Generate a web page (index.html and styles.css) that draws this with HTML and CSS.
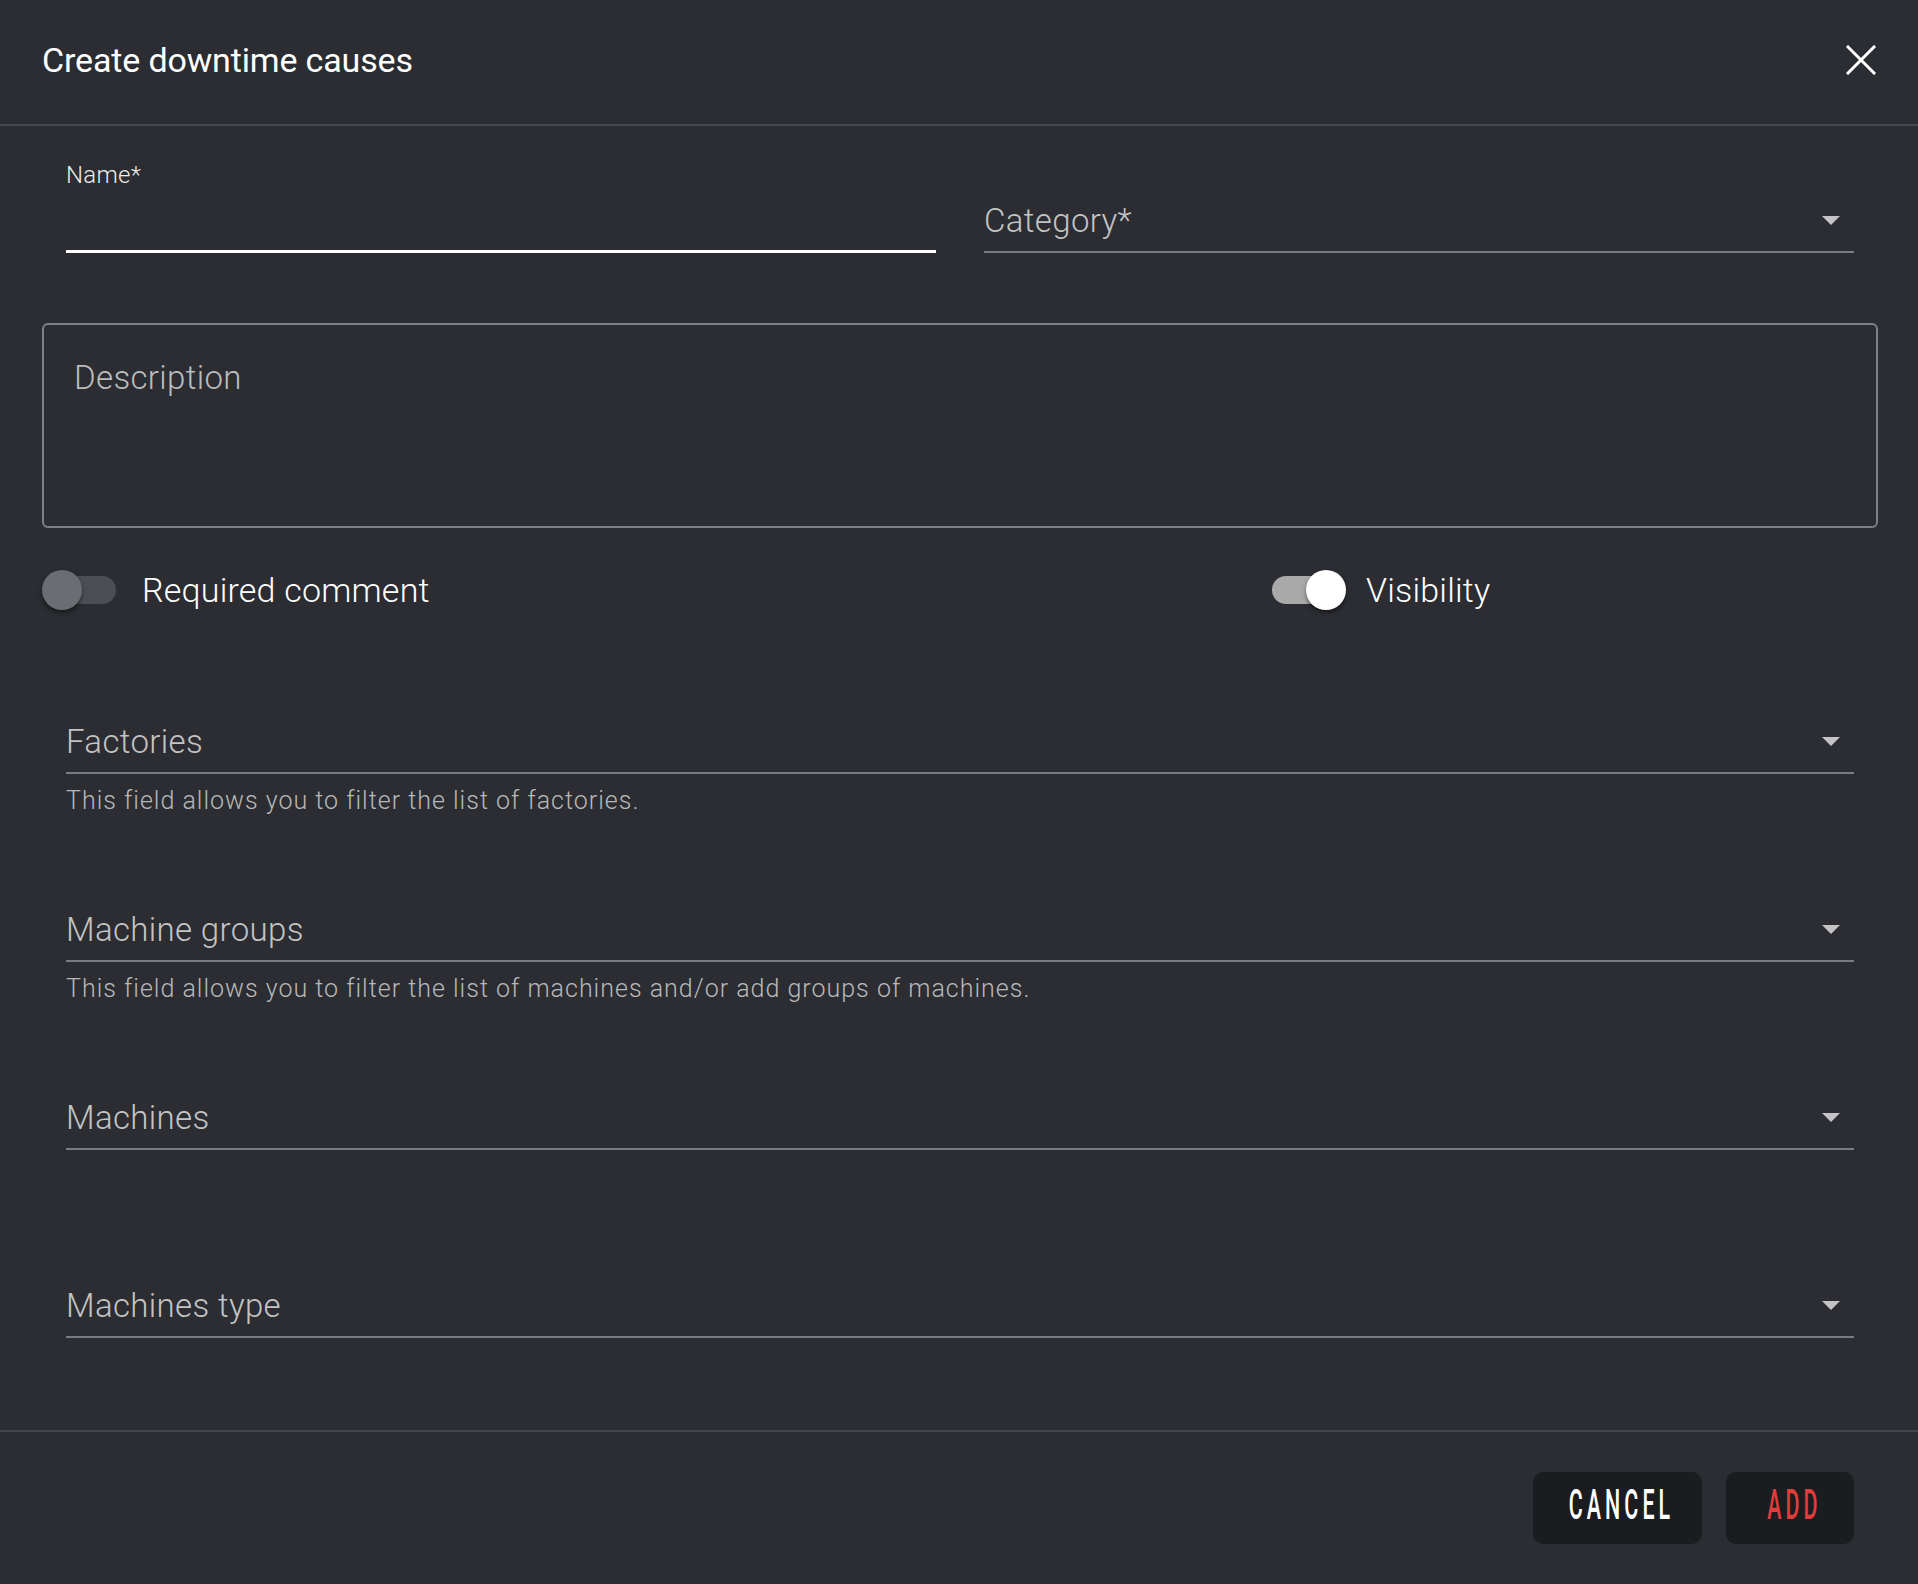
FILE: index.html
```html
<!DOCTYPE html>
<html lang="en">
<head>
<meta charset="utf-8">
<title>Create downtime causes</title>
<link rel="stylesheet" href="styles.css">
</head>
<body>
<div class="dialog">
  <header class="dlg-header">
    <h2 class="dlg-title">Create downtime causes</h2>
    <button class="close-btn" aria-label="Close">
      <svg width="30" height="30" viewBox="0 0 30 30"><path d="M2 2 L28 28 M28 2 L2 28" stroke="#fff" stroke-width="3" stroke-linecap="square" fill="none"/></svg>
    </button>
  </header>

  <main class="dlg-body">
    <div class="row-top">
      <div class="field">
        <label class="field-label">Name*</label>
        <div class="input-line"></div>
      </div>
      <div class="field">
        <div class="select-line">
          <span class="placeholder">Category*</span>
          <svg class="arrow" width="18" height="9" viewBox="0 0 18 9"><polygon points="0,0 18,0 9,9" fill="#c4c4c4"/></svg>
        </div>
      </div>
    </div>

    <div class="textarea"><span class="placeholder">Description</span></div>

    <div class="toggles">
      <div class="toggle">
        <span class="switch"><span class="track"></span><span class="thumb"></span></span>
        <span class="toggle-text">Required comment</span>
      </div>
      <div class="toggle on">
        <span class="switch"><span class="track"></span><span class="thumb"></span></span>
        <span class="toggle-text">Visibility</span>
      </div>
    </div>

    <div class="selects">
      <div class="select-field">
        <div class="select-line">
          <span class="placeholder">Factories</span>
          <svg class="arrow" width="18" height="9" viewBox="0 0 18 9"><polygon points="0,0 18,0 9,9" fill="#c4c4c4"/></svg>
        </div>
        <p class="helper">This field allows you to filter the list of factories.</p>
      </div>
      <div class="select-field">
        <div class="select-line">
          <span class="placeholder">Machine groups</span>
          <svg class="arrow" width="18" height="9" viewBox="0 0 18 9"><polygon points="0,0 18,0 9,9" fill="#c4c4c4"/></svg>
        </div>
        <p class="helper">This field allows you to filter the list of machines and/or add groups of machines.</p>
      </div>
      <div class="select-field">
        <div class="select-line">
          <span class="placeholder">Machines</span>
          <svg class="arrow" width="18" height="9" viewBox="0 0 18 9"><polygon points="0,0 18,0 9,9" fill="#c4c4c4"/></svg>
        </div>
      </div>
      <div class="select-field">
        <div class="select-line">
          <span class="placeholder">Machines type</span>
          <svg class="arrow" width="18" height="9" viewBox="0 0 18 9"><polygon points="0,0 18,0 9,9" fill="#c4c4c4"/></svg>
        </div>
      </div>
    </div>
  </main>

  <footer class="dlg-footer">
    <button class="btn btn-cancel"><span class="btn-text">CANCEL</span></button>
    <button class="btn btn-add"><span class="btn-text">ADD</span></button>
  </footer>
</div>
</body>
</html>
```

FILE: styles.css
```css
html, body {
  margin: 0;
  padding: 0;
  background: #2b2d32;
}

body {
  font-family: Roboto, "Liberation Sans", sans-serif;
  color: #fff;
}

.dialog {
  display: flex;
  flex-direction: column;
  min-height: 100vh;
}

/* Header */
.dlg-header {
  height: 126px;
  box-sizing: border-box;
  padding: 0 42px 4px 42px;
  display: flex;
  align-items: center;
  justify-content: space-between;
  border-bottom: 2px solid #43464b;
}

.dlg-title {
  margin: 0;
  font-size: 34px;
  font-weight: 400;
  color: #fff;
  letter-spacing: -0.15px;
}

.close-btn {
  width: 30px;
  height: 30px;
  padding: 0;
  border: 0;
  background: none;
  display: flex;
  cursor: pointer;
}

/* Body */
.dlg-body {
  padding: 0 40px 32px 42px;
}

.row-top {
  margin-top: 35px;
  padding: 0 24px;
  display: grid;
  grid-template-columns: 1fr 1fr;
  column-gap: 48px;
  align-items: end;
}

.field-label {
  display: block;
  font-size: 24px;
  line-height: 28px;
  font-weight: 300;
  letter-spacing: 0.3px;
  color: #ececec;
}

.input-line {
  height: 61px;
  border-bottom: 3px solid #ffffff;
}

.select-line {
  height: 62px;
  border-bottom: 2px solid #7a7b7e;
  display: flex;
  align-items: center;
  justify-content: space-between;
  padding-right: 14px;
}

.placeholder {
  font-size: 33px;
  font-weight: 300;
  letter-spacing: 0.35px;
  color: #c3c3c3;
}

.arrow {
  display: block;
  flex: none;
}

.textarea {
  margin-top: 70px;
  height: 205px;
  box-sizing: border-box;
  border: 2px solid #7f8084;
  border-radius: 6px;
  padding: 33px 30px;
  line-height: 40px;
}

.textarea .placeholder {
  color: #bcbcbc;
}

/* Toggles */
.toggles {
  margin-top: 42px;
  height: 40px;
  display: grid;
  grid-template-columns: 2fr 1fr;
}

.toggle {
  display: flex;
  align-items: center;
  gap: 20px;
}

.switch {
  position: relative;
  width: 80px;
  height: 40px;
  flex: none;
}

.track {
  position: absolute;
  left: 6px;
  top: 6px;
  width: 68px;
  height: 28px;
  border-radius: 14px;
  background: #4b4e53;
}

.thumb {
  position: absolute;
  left: 0;
  top: 0;
  width: 40px;
  height: 40px;
  border-radius: 50%;
  background: #6a6d72;
  box-shadow: 0 3px 3px rgba(0, 0, 0, 0.3), 0 2px 6px rgba(0, 0, 0, 0.2);
}

.toggle.on .track {
  background: #a9a9aa;
}

.toggle.on .thumb {
  left: 40px;
  background: #ffffff;
}

.toggle-text {
  font-size: 34px;
  font-weight: 300;
  letter-spacing: 0.2px;
  color: #fff;
}

/* Selects */
.selects {
  margin-top: 100px;
  padding: 0 24px;
  display: flex;
  flex-direction: column;
  gap: 64px;
}

.select-field {
  height: 124px;
}

.helper {
  margin: 13px 0 0;
  font-size: 25px;
  line-height: 28px;
  font-weight: 300;
  letter-spacing: 1px;
  color: #b8b8b8;
}

/* Footer */
.dlg-footer {
  border-top: 2px solid #43464b;
  padding: 40px 64px 40px 0;
  display: flex;
  justify-content: flex-end;
  gap: 24px;
}

.btn {
  height: 72px;
  border: 0;
  border-radius: 10px;
  background: #1b1c1f;
  padding: 0 0 7px 0;
  box-sizing: border-box;
  display: flex;
  align-items: center;
  justify-content: center;
  font-family: Roboto, "Liberation Sans", sans-serif;
  font-size: 42px;
  font-weight: 500;
  line-height: 1;
  color: #fff;
  cursor: pointer;
}

.btn-cancel {
  width: 169px;
}

.btn-add {
  width: 128px;
  color: #e03c3c;
}

.btn-text {
  display: inline-block;
  flex: none;
  letter-spacing: 8px;
  margin-right: -8px;
  transform: scaleX(0.51);
}
```
